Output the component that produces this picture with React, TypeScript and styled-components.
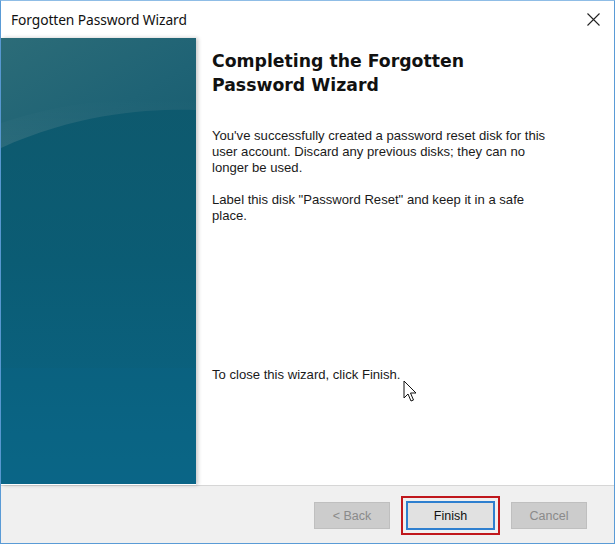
import React from "react";
import styled, { createGlobalStyle } from "styled-components";

const GlobalStyle = createGlobalStyle`
  html, body { margin: 0; padding: 0; background: #ffffff; }
  body { width: 615px; height: 544px; overflow: hidden; }
  * { box-sizing: border-box; }
`;

const Window = styled.div`
  width: 615px;
  height: 544px;
  border: 1px solid #5a9bd6;
  border-top-color: #8fbde6;
  background: #ffffff;
  display: flex;
  flex-direction: column;
  position: relative;
  font-family: "Liberation Sans", Arial, sans-serif;
`;

const TitleBar = styled.div`
  height: 37px;
  flex: none;
  display: flex;
  align-items: center;
  justify-content: space-between;
  padding: 0 14px 0 10px;
`;

const Title = styled.div`
  font-family: "Noto Sans", "Open Sans", sans-serif;
  font-size: 13.8px;
  color: #111;
  letter-spacing: -0.1px;
`;

const CloseButton = styled.div`
  width: 14px;
  height: 14px;
  display: flex;
  align-items: center;
  justify-content: center;
`;

const Body = styled.div`
  flex: 1;
  display: flex;
  min-height: 0;
`;

const SidePanel = styled.div`
  width: 195px;
  flex: none;
  position: relative;
  box-shadow: 2px 0 4px rgba(0, 0, 0, 0.22);
  z-index: 1;
  svg { display: block; }
`;

const Content = styled.div`
  flex: 1;
  display: flex;
  flex-direction: column;
  padding: 11px 20px 102px 16px;
  position: relative;
`;

const Heading = styled.h1`
  margin: 0;
  font-family: "DejaVu Sans", Verdana, sans-serif;
  font-weight: bold;
  font-size: 17.3px;
  line-height: 24px;
  color: #111;
`;

const Paragraph = styled.p<{ $top?: number }>`
  margin: ${(p) => p.$top ?? 16}px 0 0 0;
  font-size: 13.1px;
  line-height: 16px;
  color: #1a1a1a;
  white-space: nowrap;
`;

const Closing = styled(Paragraph)`
  margin-top: auto;
`;

const Footer = styled.div`
  height: 58px;
  flex: none;
  background: #f0f0f0;
  border-top: 1px solid #d6d6d6;
  display: flex;
  align-items: center;
  justify-content: flex-end;
  gap: 11px;
  padding: 2px 27px 0 0;
`;

const Button = styled.button<{ $primary?: boolean }>`
  width: ${(p) => (p.$primary ? 89 : 76)}px;
  height: ${(p) => (p.$primary ? 29 : 27)}px;
  font-family: "Liberation Sans", Arial, sans-serif;
  font-size: 12.5px;
  padding: 0;
  background: ${(p) => (p.$primary ? "#e1e1e1" : "#cccccc")};
  color: ${(p) => (p.$primary ? "#111" : "#8a8a8a")};
  border: ${(p) => (p.$primary ? "2px solid #2e7fcf" : "1px solid #bfbfbf")};
`;

const Highlight = styled.div`
  border: 2px solid #c0171c;
  padding: 3px 3px;
  display: flex;
`;

const Cursor = styled.svg`
  position: absolute;
  left: 402px;
  top: 379px;
  z-index: 5;
`;

export default function App() {
  return (
    <>
      <GlobalStyle />
      <Window>
        <TitleBar>
          <Title>Forgotten Password Wizard</Title>
          <CloseButton>
            <svg width="13" height="13" viewBox="0 0 13 13">
              <path d="M0.5 0.5 L12.5 12.5 M12.5 0.5 L0.5 12.5" stroke="#222" strokeWidth="1.1" />
            </svg>
          </CloseButton>
        </TitleBar>
        <Body>
          <SidePanel>
            <svg width="195" height="446" viewBox="0 0 195 446">
              <defs>
                <linearGradient id="base" x1="0" y1="0" x2="0" y2="1">
                  <stop offset="0" stopColor="#0f586b" />
                  <stop offset="0.5" stopColor="#0b5c74" />
                  <stop offset="1" stopColor="#0a6586" />
                </linearGradient>
                <linearGradient id="top" x1="0" y1="0" x2="1" y2="1">
                  <stop offset="0" stopColor="#2c6c78" />
                  <stop offset="0.6" stopColor="#1f6375" />
                  <stop offset="1" stopColor="#185d70" />
                </linearGradient>
                <linearGradient id="glow" x1="0" y1="0" x2="0" y2="1">
                  <stop offset="0" stopColor="#ffffff" stopOpacity="0" />
                  <stop offset="1" stopColor="#ffffff" stopOpacity="0.04" />
                </linearGradient>
              </defs>
              <rect width="195" height="446" fill="url(#base)" />
              <path d="M0 0 H195 V72 C150 71 80 74 0 110 Z" fill="url(#top)" />
              <path d="M0 85 C80 58 150 60 195 60 V72 C150 71 80 74 0 110 Z" fill="url(#glow)" />
              <rect x="0" y="330" width="195" height="116" fill="#0c6a8a" opacity="0.2" />
            </svg>
          </SidePanel>
          <Content>
            <Heading>
              Completing the Forgotten
              <br />
              Password Wizard
            </Heading>
            <Paragraph $top={31}>
              You've successfully created a password reset disk for this
              <br />
              user account. Discard any previous disks; they can no
              <br />
              longer be used.
            </Paragraph>
            <Paragraph>
              Label this disk "Password Reset" and keep it in a safe
              <br />
              place.
            </Paragraph>
            <Closing>To close this wizard, click Finish.</Closing>
          </Content>
        </Body>
        <Footer>
          <Button disabled>&lt; Back</Button>
          <Highlight>
            <Button $primary>Finish</Button>
          </Highlight>
          <Button disabled>Cancel</Button>
        </Footer>
        <Cursor width="16" height="24" viewBox="0 0 16 24">
          <path
            d="M1 1 L1 18 L5 14 L8 21 L10.5 20 L7.5 13 L13 13 Z"
            fill="#ffffff"
            stroke="#111"
            strokeWidth="1"
            strokeLinejoin="round"
          />
        </Cursor>
      </Window>
    </>
  );
}
